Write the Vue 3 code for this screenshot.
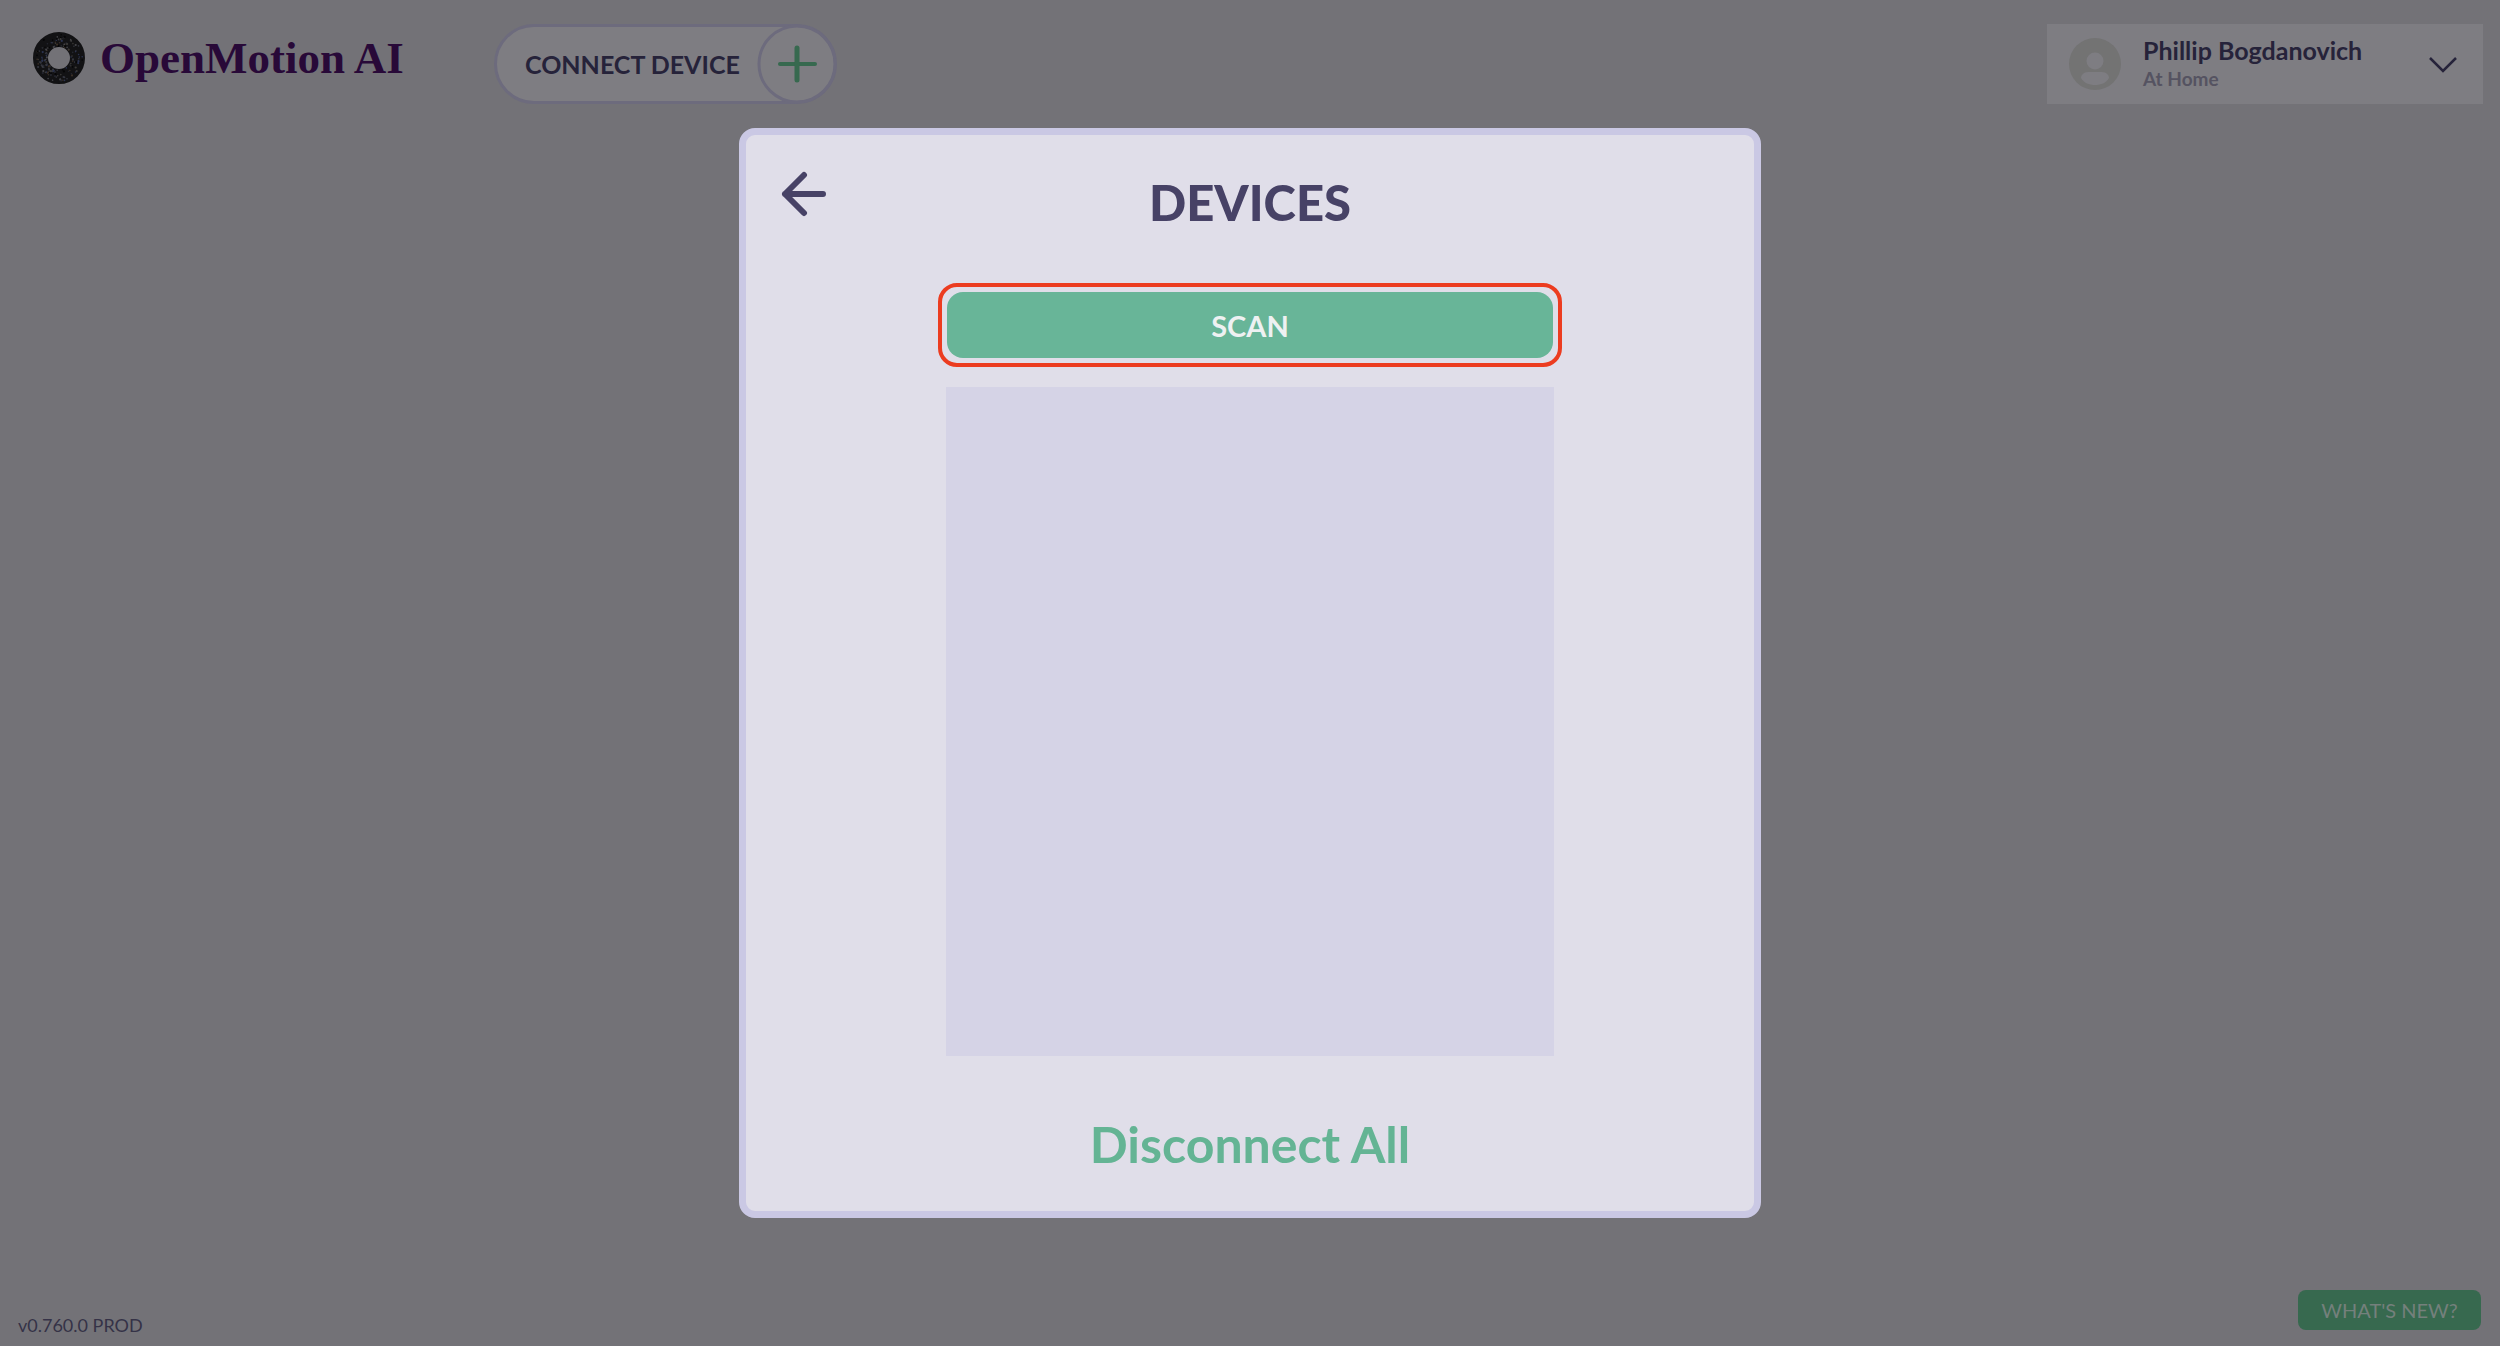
<script setup>
import { ref } from 'vue'

const userName = 'Phillip Bogdanovich'
const location = 'At Home'
const version = 'v0.760.0 PROD'
const devices = ref([])

// Mineral-like speckles scattered over the logo ring.
const tints = ['#34363f', '#3b3a38', '#2b3350', '#46464a', '#050506', '#3a2f26', '#24262e']
const noise = (n) => {
  const v = Math.sin(n * 127.1) * 43758.5453
  return v - Math.floor(v)
}
const speckles = Array.from({ length: 150 }, (_, i) => {
  const angle = noise(i + 1) * Math.PI * 2
  const radius = 12 + noise(i + 501) * 12
  return {
    x: (27 + radius * Math.cos(angle)).toFixed(1),
    y: (27 + radius * Math.sin(angle)).toFixed(1),
    r: i % 3 === 0 ? 1.1 : 0.8,
    fill: tints[i % tints.length],
  }
})
</script>

<template>
  <div class="page">
    <header class="header">
      <a class="brand" href="#">
        <svg class="brand-mark" viewBox="0 0 54 54" aria-hidden="true">
          <circle cx="27" cy="27" r="18.5" fill="none" stroke="#121214" stroke-width="15" />
          <circle v-for="(s, i) in speckles" :key="i" :cx="s.x" :cy="s.y" :r="s.r" :fill="s.fill" />
        </svg>
        <span>OpenMotion AI</span>
      </a>

      <button class="connect" type="button">
        <span class="connect-label">CONNECT DEVICE</span>
        <svg class="connect-plus" viewBox="0 0 80 80" aria-hidden="true">
          <circle cx="40" cy="40" r="38" fill="none" stroke="#6d6b7d" stroke-width="3" />
          <path d="M23 40H58" stroke="#37694f" stroke-width="4" stroke-linecap="round" />
          <path d="M40 24V56" stroke="#37694f" stroke-width="5" stroke-linecap="round" />
        </svg>
      </button>

      <button class="profile" type="button">
        <svg class="avatar" viewBox="0 0 52 52" aria-hidden="true">
          <circle cx="26" cy="26" r="26" fill="#737373" />
          <circle cx="26" cy="23" r="8.5" fill="#7e7d82" />
          <path d="M19 34H33C37 34 40 37 40 40C37 45 32 47 26 47S15 45 12 40C12 37 15 34 19 34Z" fill="#7e7d82" />
        </svg>
        <span class="who">
          <span class="name">{{ userName }}</span>
          <span class="place">{{ location }}</span>
        </span>
        <svg class="chevron" viewBox="0 0 30 18" aria-hidden="true">
          <path d="M2 3L15 16L28 3" fill="none" stroke="#26233a" stroke-width="2.5" />
        </svg>
      </button>
    </header>

    <footer class="footer">
      <span class="version">{{ version }}</span>
      <button class="news" type="button">WHAT'S NEW?</button>
    </footer>

    <div class="overlay">
      <section class="dialog" role="dialog" aria-labelledby="dialog-title">
        <button class="back" type="button" aria-label="Back">
          <svg viewBox="0 0 46 46" aria-hidden="true">
            <path d="M23 4L4 23L23 42M4 23H42" fill="none" stroke="#474266" stroke-width="6" stroke-linecap="round" stroke-linejoin="round" />
          </svg>
        </button>
        <h1 id="dialog-title" class="title">DEVICES</h1>
        <div class="scan-frame">
          <button class="scan" type="button">SCAN</button>
        </div>
        <ul class="devices" aria-label="Devices">
          <li v-for="device in devices" :key="device">{{ device }}</li>
        </ul>
        <button class="disconnect" type="button">Disconnect All</button>
      </section>
    </div>
  </div>
</template>

<style>
body {
  margin: 0;
  background: #737277;
}
</style>

<style scoped>
.page {
  min-height: 100vh;
  display: flex;
  flex-direction: column;
  justify-content: space-between;
  box-sizing: border-box;
  font-family: Lato, sans-serif;
  background: #737277;
}

button {
  margin: 0;
  padding: 0;
  border: 0;
  background: none;
  font-family: inherit;
  cursor: pointer;
}

svg {
  display: block;
  flex: none;
}

.header {
  display: flex;
  align-items: flex-start;
  padding: 24px 17px 0 32px;
}

.brand {
  display: flex;
  align-items: center;
  gap: 14px;
  width: 462px;
  margin-top: 7px;
  font-family: "Liberation Serif", serif;
  font-size: 45px;
  font-weight: 700;
  line-height: 54px;
  color: #280938;
  text-decoration: none;
  white-space: nowrap;
}

.brand-mark {
  width: 54px;
  height: 54px;
}

.connect {
  display: flex;
  align-items: center;
  box-sizing: border-box;
  height: 80px;
  border: 3px solid #6d6b7d;
  border-radius: 40px;
  background: #7e7d82;
}

.connect-label {
  width: 260px;
  padding-left: 28px;
  box-sizing: border-box;
  text-align: left;
  font-size: 25px;
  font-weight: 700;
  color: #26233a;
  white-space: nowrap;
}

.connect-plus {
  width: 80px;
  height: 80px;
  margin-right: -3px;
}

.profile {
  display: flex;
  align-items: center;
  width: 436px;
  height: 80px;
  margin-left: auto;
  padding: 0 25px 0 22px;
  background: #7e7d82;
  text-align: left;
}

.avatar {
  width: 52px;
  height: 52px;
}

.who {
  display: flex;
  flex: 1;
  flex-direction: column;
  margin-left: 22px;
}

.name {
  font-size: 25px;
  font-weight: 700;
  line-height: 30px;
  color: #26233a;
}

.place {
  font-size: 19px;
  font-weight: 700;
  line-height: 28px;
  color: #555361;
}

.chevron {
  width: 30px;
  height: 18px;
}

.footer {
  display: flex;
  align-items: flex-end;
  justify-content: space-between;
  padding: 0 19px 16px 18px;
}

.version {
  font-size: 18px;
  line-height: 24px;
  margin-bottom: -7px;
  color: #353247;
}

.news {
  width: 183px;
  height: 40px;
  border-radius: 8px;
  background: #37694f;
  font-size: 20px;
  color: #74807c;
}

.overlay {
  position: fixed;
  inset: 0;
  display: flex;
  align-items: center;
  justify-content: center;
}

.dialog {
  position: relative;
  display: flex;
  flex-direction: column;
  align-items: center;
  box-sizing: border-box;
  width: 1022px;
  max-width: 90%;
  padding: 37px 0 35px;
  border: 7px solid #cac8e4;
  border-radius: 16px;
  background: #e0dee9;
}

.back {
  position: absolute;
  top: 36px;
  left: 35px;
}

.back svg {
  width: 46px;
  height: 46px;
}

.title {
  margin: 0 0 51px;
  font-size: 49px;
  font-weight: 900;
  line-height: 60px;
  color: #474266;
}

.scan-frame {
  box-sizing: border-box;
  width: 62%;
  padding: 5px;
  border: 4px solid #ec3c20;
  border-radius: 19px;
}

.scan {
  display: block;
  width: 100%;
  height: 66px;
  border-radius: 16px;
  background: #68b598;
  font-size: 29px;
  font-weight: 700;
  color: #eef1f2;
}

.devices {
  box-sizing: border-box;
  width: 608px;
  max-width: 100%;
  min-height: 669px;
  margin: 20px 0 56px;
  padding: 0;
  list-style: none;
  background: #d5d3e6;
}

.disconnect {
  font-size: 50px;
  font-weight: 700;
  line-height: 64px;
  color: #64b494;
}
</style>
